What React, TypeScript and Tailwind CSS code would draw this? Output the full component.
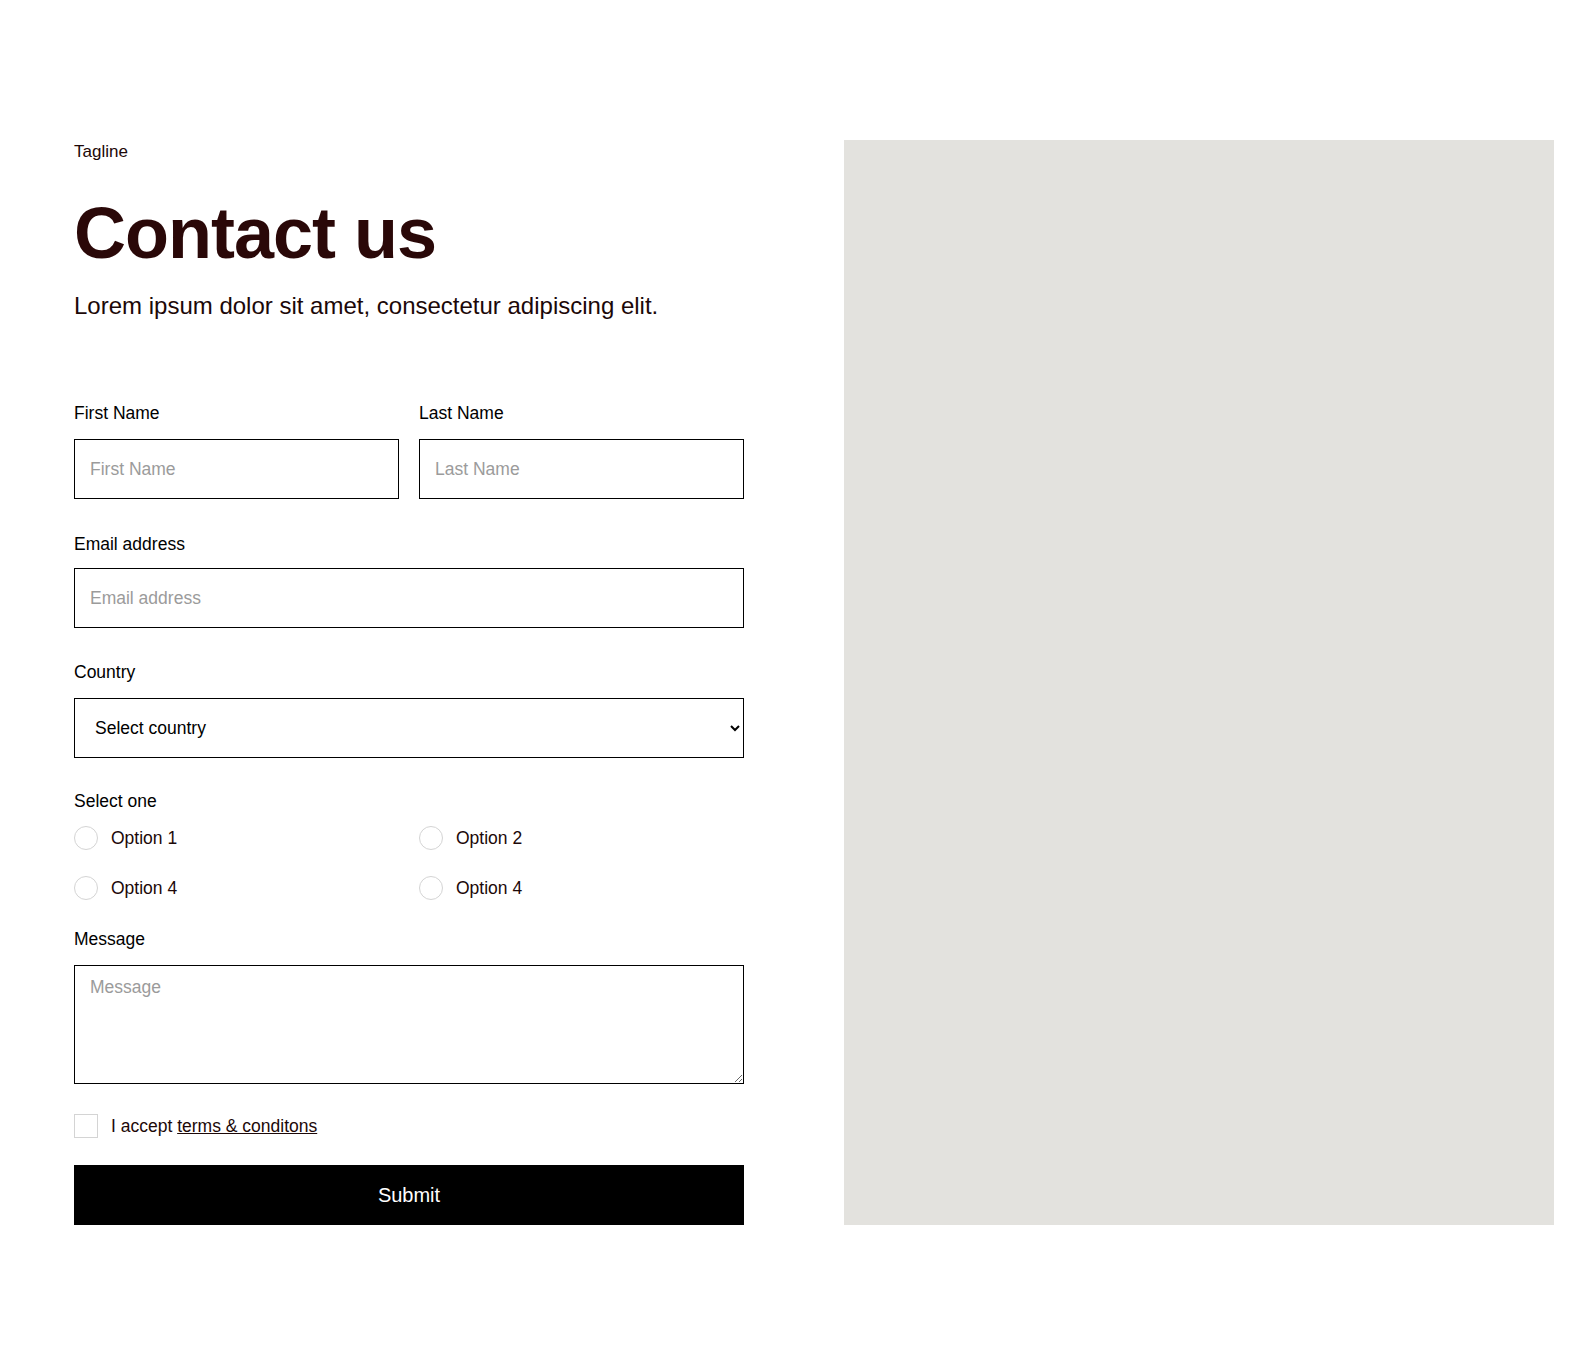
import React from 'react';

const fieldInput =
  "w-full h-[60px] border border-black bg-white pl-[15px] pr-4 text-[17.5px] text-black placeholder:text-[#9b9b9b] outline-none";

function Field({
  label,
  children,
  className = '',
  labelClass = 'mb-[12px]',
}: {
  label: string;
  children: React.ReactNode;
  className?: string;
  labelClass?: string;
}) {
  return (
    <div className={`flex flex-col ${className}`}>
      <label className={`text-[17.5px] leading-[28px] text-black ${labelClass}`}>{label}</label>
      {children}
    </div>
  );
}

function Radio({ label }: { label: string }) {
  return (
    <label className="flex items-center gap-[13px] h-6 text-[17.5px] text-[#1c0808]">
      <input
        type="radio"
        name="choice"
        className="appearance-none w-6 h-6 rounded-full border border-[#d4d4d4] bg-white shrink-0"
      />
      <span>{label}</span>
    </label>
  );
}

export default function App() {
  return (
    <div className="min-h-screen bg-white font-['Liberation_Sans',Arial,sans-serif] pl-[74px] pr-[34px] pt-[140px] pb-[140px]">
      <div className="grid grid-cols-[670px_710px] gap-x-[100px]">
        <div className="flex flex-col">
          <p className="text-[17px] leading-[24px] text-[#1c0808]">Tagline</p>
          <h1 className="mt-[26px] text-[72px] leading-[86px] font-bold tracking-[-1px] text-[#2a0808]">Contact us</h1>
          <p className="mt-3 text-[24px] leading-[36px] text-[#1c0808]">
            Lorem ipsum dolor sit amet, consectetur adipiscing elit.
          </p>

          <form className="mt-[75px] flex flex-col" onSubmit={(e) => e.preventDefault()}>
            <div className="grid grid-cols-2 gap-x-5">
              <Field label="First Name">
                <input type="text" placeholder="First Name" className={fieldInput} />
              </Field>
              <Field label="Last Name">
                <input type="text" placeholder="Last Name" className={fieldInput} />
              </Field>
            </div>

            <Field label="Email address" className="mt-[31px]" labelClass="mb-[10px]">
              <input type="email" placeholder="Email address" className={fieldInput} />
            </Field>

            <Field label="Country" className="mt-[30px]">
              <select className="w-full h-[60px] border border-black bg-white pl-4 pr-[10px] text-[17.5px] text-black outline-none">
                <option>Select country</option>
                <option>United States</option>
                <option>United Kingdom</option>
                <option>Canada</option>
              </select>
            </Field>

            <div className="mt-[29px] flex flex-col">
              <span className="text-[17.5px] leading-[28px] text-black">Select one</span>
              <div className="mt-[11px] grid grid-cols-2 gap-x-5 gap-y-[26px]">
                <Radio label="Option 1" />
                <Radio label="Option 2" />
                <Radio label="Option 4" />
                <Radio label="Option 4" />
              </div>
            </div>

            <Field label="Message" className="mt-[25px]">
              <textarea
                placeholder="Message"
                className="w-full h-[119px] border border-black bg-white pl-[15px] pr-4 py-2 text-[17.5px] text-black placeholder:text-[#9b9b9b] outline-none"
              />
            </Field>

            <label className="mt-[30px] flex items-center gap-[13px] h-6 text-[17.5px] text-[#1c0808]">
              <input
                type="checkbox"
                className="appearance-none w-6 h-6 border border-[#d4d4d4] bg-white shrink-0"
              />
              <span>
                I accept <a href="#" className="underline">terms &amp; conditons</a>
              </span>
            </label>

            <button type="submit" className="mt-[27px] h-[60px] w-full bg-black text-white text-[20px]">
              Submit
            </button>
          </form>
        </div>

        <div className="bg-[#e3e2de]" />
      </div>
    </div>
  );
}
